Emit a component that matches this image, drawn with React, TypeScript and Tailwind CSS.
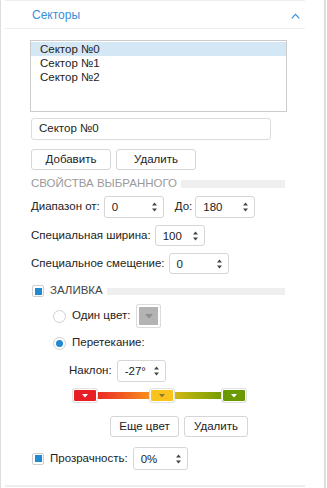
import React from "react";

const font = { fontFamily: '"Liberation Sans", Arial, sans-serif' };

function Arrows() {
  return (
    <svg width="7" height="14" viewBox="0 0 7 14" className="shrink-0">
      <path d="M3.5 2.5 L6 5.5 L1 5.5 Z" fill="#444" />
      <path d="M3.5 11.5 L6 8.5 L1 8.5 Z" fill="#444" />
    </svg>
  );
}

function Spinner({ value, w, h = "h-[22px]" }: { value: string; w: string; h?: string }) {
  return (
    <div
      className={`${w} ${h} border border-[#d6d6d6] rounded-[3px] bg-white flex items-center justify-between pl-[7px] pr-[5px] text-[11.5px] text-[#222]`}
    >
      <span className="pt-[2px]">{value}</span>
      <Arrows />
    </div>
  );
}

function Btn({ label, w }: { label: string; w: string }) {
  return (
    <div
      className={`${w} h-[21px] border border-[#d6d6d6] rounded-[3px] bg-white flex items-center justify-center text-[11.5px] text-[#222]`}
    >
      {label}
    </div>
  );
}

function Check() {
  return (
    <div className="w-[12px] h-[12px] border border-[#cfcfcf] rounded-[2px] bg-white flex items-center justify-center">
      <div className="w-[7px] h-[7px] bg-[#1f8ad2]" />
    </div>
  );
}

function Radio({ on }: { on?: boolean }) {
  return (
    <div className="w-[13px] h-[13px] rounded-full border border-[#d0d0d0] bg-white flex items-center justify-center">
      {on && <div className="w-[7px] h-[7px] rounded-full bg-[#1f8ad2]" />}
    </div>
  );
}

function Stop({ color, tri }: { color: string; tri: string }) {
  return (
    <div
      className="w-[24px] h-[13px] border border-white rounded-[2px] flex items-center justify-center shadow-[0_0_0_1px_#e2e2e2]"
      style={{ background: color }}
    >
      <svg width="6" height="4" viewBox="0 0 6 4">
        <path d="M0 0 L6 0 L3 3.5 Z" fill={tri} />
      </svg>
    </div>
  );
}

export default function App() {
  return (
    <div
      className="w-[327px] h-[488px] bg-white flex overflow-hidden text-[#222] text-[11.5px]"
      style={font}
    >
      <div className="w-[1px] h-full bg-[#dedede]" />
      <div className="w-[323px] h-full">
        <div className="ml-[4px] w-[300px] h-full flex flex-col border-t border-[#eeeeee]">
          {/* header */}
          <div className="h-[28px] border-b border-[#eeeeee] flex items-center justify-between pl-[27px] pr-[5px]">
            <span className="text-[12px] text-[#3a8fd6] pt-[1px]">Секторы</span>
            <svg width="9" height="6" viewBox="0 0 9 6" className="mt-[2px]">
              <path d="M0.7 5.3 L4.5 1.3 L8.3 5.3" fill="none" stroke="#3a8fd6" strokeWidth="1.2" />
            </svg>
          </div>

          <div className="pl-[25px] flex flex-col">
            {/* listbox */}
            <div className="mt-[11px] w-[257px] h-[72px] border border-[#cccccc] bg-white pt-[1px] leading-[14px]">
              <div className="bg-[#d3e7f5] pl-[9px] h-[14px]">Сектор №0</div>
              <div className="pl-[9px] h-[14px]">Сектор №1</div>
              <div className="pl-[9px] h-[14px]">Сектор №2</div>
            </div>

            {/* text input */}
            <div className="mt-[6px] ml-[1px] w-[240px] h-[22px] border border-[#dcdcdc] rounded-[3px] flex items-center pl-[7px]">
              Сектор №0
            </div>

            {/* buttons */}
            <div className="mt-[9px] ml-[1px] flex gap-[5px]">
              <Btn label="Добавить" w="w-[80px]" />
              <Btn label="Удалить" w="w-[80px]" />
            </div>

            {/* section title */}
            <div className="mt-[7px] ml-[1px] flex items-center h-[13px]">
              <span className="text-[#9a9a9a] uppercase leading-[13px]">
                СВОЙСТВА ВЫБРАННОГО
              </span>
              <div className="ml-[4px] flex-1 mr-[20px] h-[8px] bg-[#efefef]" />
            </div>

            {/* range */}
            <div className="mt-[6px] ml-[1px] flex items-center h-[22px]">
              <span>Диапазон от:</span>
              <div className="ml-[4px]">
                <Spinner value="0" w="w-[60px]" />
              </div>
              <span className="ml-[11px]">До:</span>
              <div className="ml-[3px]">
                <Spinner value="180" w="w-[60px]" />
              </div>
            </div>

            <div className="mt-[7px] ml-[1px] flex items-center h-[21px]">
              <span>Специальная ширина:</span>
              <div className="ml-[4px]">
                <Spinner value="100" w="w-[50px]" h="h-[21px]" />
              </div>
            </div>

            <div className="mt-[7px] ml-[1px] flex items-center h-[21px]">
              <span>Специальное смещение:</span>
              <div className="ml-[4px]">
                <Spinner value="0" w="w-[60px]" h="h-[21px]" />
              </div>
            </div>

            {/* fill */}
            <div className="mt-[11px] ml-[2px] flex items-center h-[12px]">
              <Check />
              <span className="ml-[6px] text-[#444]">ЗАЛИВКА</span>
              <div className="ml-[4px] flex-1 mr-[20px] h-[7px] bg-[#efefef]" />
            </div>

            <div className="mt-[7px] ml-[23px] flex items-center h-[24px]">
              <Radio />
              <span className="ml-[6px]">Один цвет:</span>
              <div className="ml-[6px] w-[25px] h-[24px] border border-[#dcdcdc] rounded-[2px] p-[2px] bg-white">
                <div className="w-full h-full bg-[#b3b3b3] flex items-center justify-center">
                  <svg width="8" height="5" viewBox="0 0 8 5">
                    <path d="M0 0 L8 0 L4 4.5 Z" fill="#8e8e8e" />
                  </svg>
                </div>
              </div>
            </div>

            <div className="mt-[8px] ml-[23px] flex items-center h-[14px]">
              <Radio on />
              <span className="ml-[6px]">Перетекание:</span>
            </div>

            <div className="mt-[10px] ml-[39px] flex items-center h-[22px]">
              <span>Наклон:</span>
              <div className="ml-[5px]">
                <Spinner value="-27°" w="w-[49px]" />
              </div>
            </div>

            {/* gradient */}
            <div className="mt-[7px] ml-[43px] w-[172px] h-[13px] flex items-center relative">
              <div
                className="absolute left-[20px] right-[20px] top-[3px] h-[7px]"
                style={{
                  background:
                    "linear-gradient(to right, #ea2226 0%, #f7941d 45%, #f8c11a 52%, #c8b616 65%, #6e9c00 100%)",
                }}
              />
              <div className="absolute left-0 top-0">
                <Stop color="#e81e25" tri="#ffffff" />
              </div>
              <div className="absolute left-[77px] top-0">
                <Stop color="#fcc31d" tri="#8a7a3a" />
              </div>
              <div className="absolute left-[149px] top-0">
                <Stop color="#6b9a00" tri="#ffffff" />
              </div>
            </div>

            <div className="mt-[14px] ml-[80px] flex gap-[5px]">
              <Btn label="Еще цвет" w="w-[69px]" />
              <Btn label="Удалить" w="w-[64px]" />
            </div>

            {/* transparency */}
            <div className="mt-[10px] ml-[2px] flex items-center h-[23px]">
              <Check />
              <span className="ml-[6px]">Прозрачность:</span>
              <div className="ml-[5px]">
                <Spinner value="0%" w="w-[55px]" h="h-[23px]" />
              </div>
            </div>
          </div>
          <div className="flex-1" />
          <div className="h-[2px] bg-[#eeeeee] mb-[1px]" />
        </div>
      </div>
      <div className="w-[2px] h-full bg-[#dedede]" />
      <div className="w-[1px] h-full bg-white" />
    </div>
  );
}
